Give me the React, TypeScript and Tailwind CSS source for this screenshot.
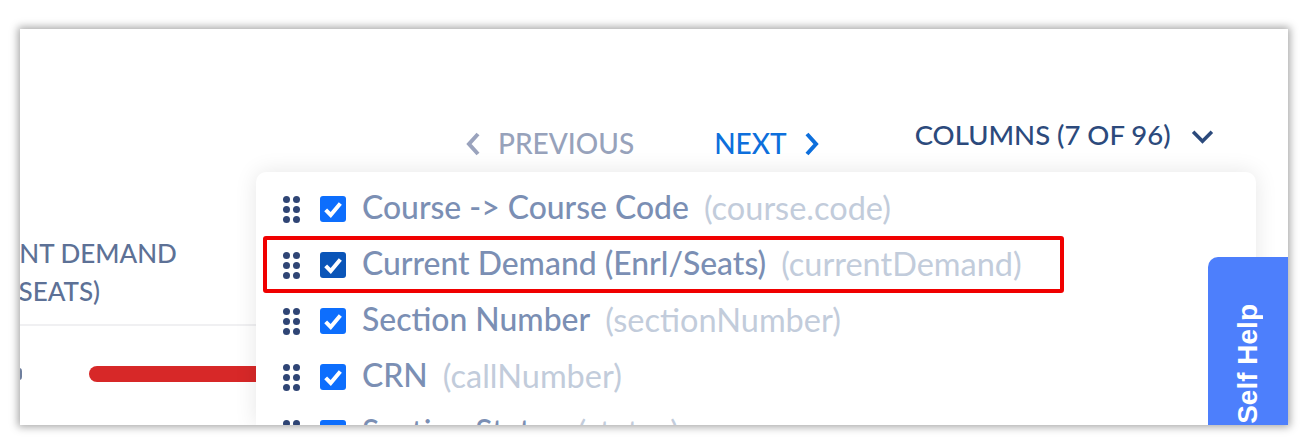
import React from 'react';

const columns = [
    { label: 'Course -> Course Code', field: '(course.code)' },
    { label: 'Current Demand (Enrl/Seats)', field: '(currentDemand)', focused: true },
    { label: 'Section Number', field: '(sectionNumber)' },
    { label: 'CRN', field: '(callNumber)' },
    { label: 'Section Status', field: '(status)' },
];

function Chevron({ d, className }: { d: string; className: string }) {
    return (
        <svg viewBox="0 0 16 24" fill="none" stroke="currentColor" strokeWidth="4" className={className}>
            <path d={d} />
        </svg>
    );
}

function DragHandle() {
    return (
        <div className="grid grid-cols-2 gap-x-[3px] gap-y-[3px] w-[17px] shrink-0">
            {[0, 1, 2, 3, 4, 5].map((i) => (
                <span key={i} className="w-[7px] h-[7px] rounded-full bg-[#2f4575]" />
            ))}
        </div>
    );
}

function ColumnRow({ label, field, focused }: { label: string; field: string; focused?: boolean }) {
    return (
        <div className="h-[56px] shrink-0 flex items-center pl-[27px]">
            <DragHandle />
            <div className={`ml-[20px] w-[26px] h-[26px] rounded-[3px] flex items-center justify-center shrink-0 ${focused ? 'bg-[#0a55b8]' : 'bg-[#0d6efd]'}`}>
                <svg viewBox="0 0 24 24" fill="none" stroke="#ffffff" strokeWidth="4.4" className="w-[22px] h-[22px]">
                    <path d="M4 13l5.5 5.5L20 6" />
                </svg>
            </div>
            <span className="ml-[16px] -mt-[2px] text-[31.9px] leading-none font-medium text-[#7b8fb4] whitespace-nowrap">{label}</span>
            <span className="ml-[15px] -mt-[2px] text-[32.5px] leading-none text-[#c2ccdb] whitespace-nowrap">{field}</span>
        </div>
    );
}

export default function App() {
    return (
        <div className="w-[1303px] h-[438px] bg-white pt-[29px] pl-[20px] overflow-hidden font-['Lato',sans-serif]">
            <div className="relative w-[1268px] h-[396px] bg-white overflow-hidden shadow-[0_0_8px_2px_rgba(0,0,0,0.35)]">
                <div className="flex h-[152px]">
                    <div className="w-[445px] shrink-0" />
                    <div className="flex items-center h-[30px] mt-[100px] text-[28px] leading-none">
                        <Chevron d="M13 2L4 12l9 10" className="w-[16px] h-[24px] text-[#9aa3bd]" />
                        <span className="ml-[17px] -mt-[2px] font-medium text-[#97a2bb]">PREVIOUS</span>
                        <span className="ml-[80px] -mt-[2px] font-medium text-[#0d6fdc]">NEXT</span>
                        <Chevron d="M3 2l9 10-9 10" className="ml-[17px] w-[16px] h-[24px] text-[#0d6fdc]" />
                    </div>
                    <div className="flex items-center h-[30px] mt-[92px] ml-[95px] text-[27.5px] leading-none text-[#2c4a7c]">
                        <span className="-mt-[2px] font-medium">COLUMNS (7 OF 96)</span>
                        <svg viewBox="0 0 24 16" fill="none" stroke="currentColor" strokeWidth="3.8" className="ml-[20px] w-[23px] h-[15px]">
                            <path d="M2 3l10 10L22 3" />
                        </svg>
                    </div>
                </div>
                <div className="w-[236px] overflow-hidden">
                    <div className="h-[145px] border-b-2 border-[#f0f0f2]">
                        <div className="-ml-[85px] pt-[53px] text-[26px] leading-[38px] font-medium text-[#5d7196] whitespace-nowrap">
                            <div>CURRENT DEMAND</div>
                            <div>(ENRL/SEATS)</div>
                        </div>
                    </div>
                    <div className="flex items-center pt-[40px]">
                        <div className="w-[69px] shrink-0 overflow-hidden">
                            <div className="-ml-[1px] w-[3px] h-[12px] rounded-r-full bg-[#6f7f9e]" />
                        </div>
                        <div className="flex-1 h-[16px] rounded-l-full bg-[#d72828]" />
                    </div>
                </div>

                <div className="absolute left-[236px] right-[32px] top-[143px] bottom-0 bg-white rounded-t-[10px] shadow-[0_0_22px_rgba(0,0,0,0.10)] overflow-hidden">
                    <div className="flex flex-col pt-[9px]">
                        {columns.map((c) => (
                            <ColumnRow key={c.label} label={c.label} field={c.field} focused={c.focused} />
                        ))}
                    </div>
                </div>

                <div className="absolute left-[243px] top-[207px] w-[801px] h-[57px] border-[4px] border-[#f00000] rounded-[3px]" />

                <div className="absolute right-0 bottom-0 w-[80px] h-[168px] bg-[#4d7ffc] rounded-tl-[10px] flex items-start justify-center">
                    <span className="[writing-mode:vertical-rl] rotate-180 mt-[47px] text-[28px] leading-none font-bold text-white whitespace-nowrap font-['Liberation_Sans',sans-serif]">
                        Self Help
                    </span>
                </div>
            </div>
        </div>
    );
}
